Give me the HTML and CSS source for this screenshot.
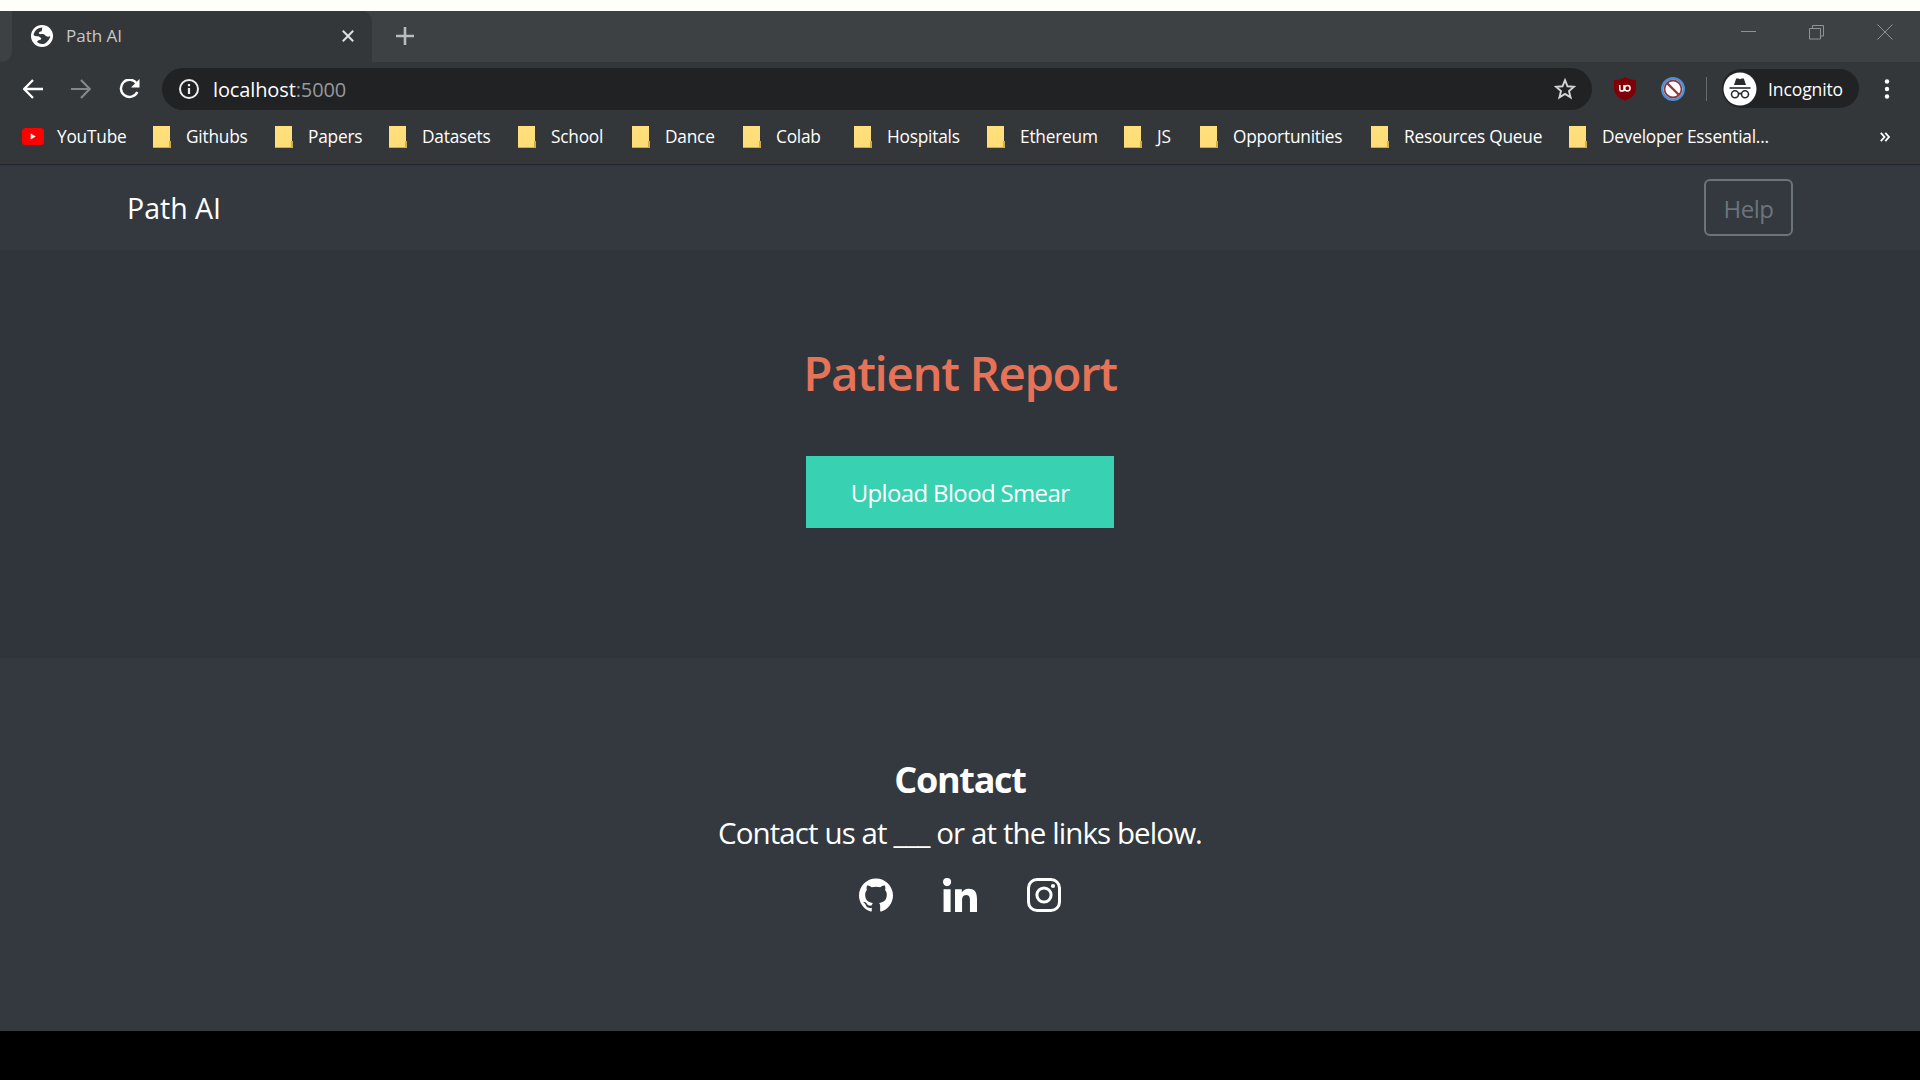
FILE: index.html
```html
<!DOCTYPE html>
<html lang="en">
<head>
<meta charset="utf-8">
<title>Path AI</title>
<link rel="stylesheet" href="styles.css">
</head>
<body>
<div class="desktop-strip"></div>
<div class="tab-strip">
  <div class="tab-edge"></div>
  <div class="tab">
    <svg class="globe" viewBox="0 0 22 22"><circle cx="11" cy="11" r="11" fill="#fff"/><path d="M11.500 2.500C7 2.600 3.200 5.500 2.600 10c1.400 1.600 3.200 1.200 4.600 1.300 1.200.1 1.600 1.600 2.900 1.600.5 1-.2 1.700-1.600 2.100-1.200.4-2.200 1-2.500 2 2.600 2.300 6.500 2.800 9.300.4 2.100-1.500 3.700-3.900 4-6.400-1.400.8-2.600 1-3.800.3-1.300-.8-2-2.100-3.600-2.300-1.500-.2-2.900.6-3.800-.3-.7-1 .4-2 1.700-2.100C11.300 6.500 10.700 4.200 11.500 2.500z" fill="#35383b"/></svg>
    <span class="tab-title">Path AI</span>
    <svg class="tab-close" viewBox="0 0 12 12"><path d="M.8.8l10.400 10.400M11.200.8L.8 11.200" stroke="#dfe1e5" stroke-width="2"/></svg>
  </div>
  <svg class="new-tab" viewBox="0 0 18 18"><path d="M9 0v18M0 9h18" stroke="#b9bcbf" stroke-width="2.600"/></svg>
  <div class="window-controls">
    <svg viewBox="0 0 16 16"><path d="M0 7.500h15" stroke="#8f9396"/></svg>
    <svg viewBox="0 0 16 16"><path d="M.5 4.500h11v10.500H.5zM3.500 4V1.500h11v10.500h-3" fill="none" stroke="#8f9396"/></svg>
    <svg viewBox="0 0 16 16"><path d="M.5.5l15 15M15.500.5l-15 15" stroke="#8f9396"/></svg>
  </div>
</div>
<div class="toolbar">
  <svg class="arrow" viewBox="0 0 20 20"><path d="M20 10H1.500M10 1L1.200 10l8.800 9" fill="none" stroke="#fff" stroke-width="2.300"/></svg>
  <svg class="arrow forward" viewBox="0 0 20 20"><path d="M0 10h18.500M10 1l8.800 9L10 19" fill="none" stroke="#85888b" stroke-width="2.200"/></svg>
  <svg class="reload" viewBox="0 0 22 20"><path d="M17.800 4.700A8.600 8.600 0 1 0 18.300 13" fill="none" stroke="#fff" stroke-width="2.400"/><path d="M20.500 0v8.500H12z" fill="#fff"/></svg>
  <div class="address">
    <svg class="info" viewBox="0 0 20 20"><circle cx="10" cy="10" r="9" fill="none" stroke="#eee" stroke-width="2"/><path d="M10 9v6M10 5v2.200" stroke="#eee" stroke-width="2.200"/></svg>
    <span class="url">localhost<span class="port">:5000</span></span>
    <svg class="star" viewBox="0 0 22 22"><path d="M11 2.200l2.500 6.100 6.500.5-5 4.200 1.600 6.400-5.600-3.500-5.600 3.500L7 13 2 8.800l6.500-.5z" fill="none" stroke="#d2d4d7" stroke-width="1.900"/></svg>
  </div>
  <svg class="ublock" viewBox="0 0 22 24"><path d="M11 0c3 2 7 2.800 11 2.900V11c0 7-5 10-11 13C5 21 0 18 0 11V2.900C4 2.800 8 2 11 0z" fill="#800006"/><path d="M5.800 8v4a2.100 2.100 0 0 0 4.200 0V8v6.200" fill="none" stroke="#fff" stroke-width="1.500"/><circle cx="13.400" cy="11.300" r="2.700" fill="none" stroke="#fff" stroke-width="1.500"/></svg>
  <svg class="blocker" viewBox="0 0 24 24"><circle cx="12" cy="12" r="10.800" fill="#fff" stroke="#4a90d9" stroke-width="2.400"/><circle cx="12" cy="12" r="8.500" fill="none" stroke="#8e3a40" stroke-width="1.800"/><path d="M6 6l12 12" stroke="#8e3a40" stroke-width="2.400"/></svg>
  <div class="divider"></div>
  <div class="incognito">
    <svg class="spy" viewBox="0 0 34 34"><circle cx="17" cy="17" r="16.500" fill="#fff"/><path d="M11 13l2.200-6.500h2.300l1.500.7 1.500-.7h2.300L23 13z" fill="#292b2e"/><path d="M6.500 16h21" stroke="#292b2e" stroke-width="1.600"/><g fill="none" stroke="#292b2e" stroke-width="1.600"><circle cx="12" cy="22.300" r="3.500"/><circle cx="22" cy="22.300" r="3.500"/><path d="M15.500 22q1.500-1.200 3 0"/></g></svg>
    <span>Incognito</span>
  </div>
  <svg class="menu" viewBox="0 0 6 20"><g fill="#fff"><circle cx="3" cy="2.500" r="2.200"/><circle cx="3" cy="10" r="2.200"/><circle cx="3" cy="17.500" r="2.200"/></g></svg>
</div>
<div class="bookmarks">
  <div class="bookmark"><svg class="youtube" viewBox="0 0 22 17"><rect width="22" height="17" rx="3.500" fill="#f00"/><path d="M8.700 5.500v6l5-3z" fill="#fff"/></svg><span>YouTube</span></div>
  <div class="bookmark"><i class="folder"></i><span>Githubs</span></div>
  <div class="bookmark"><i class="folder"></i><span>Papers</span></div>
  <div class="bookmark"><i class="folder"></i><span>Datasets</span></div>
  <div class="bookmark"><i class="folder"></i><span>School</span></div>
  <div class="bookmark"><i class="folder"></i><span>Dance</span></div>
  <div class="bookmark"><i class="folder"></i><span>Colab</span></div>
  <div class="bookmark"><i class="folder"></i><span>Hospitals</span></div>
  <div class="bookmark"><i class="folder"></i><span>Ethereum</span></div>
  <div class="bookmark"><i class="folder"></i><span>JS</span></div>
  <div class="bookmark"><i class="folder"></i><span>Opportunities</span></div>
  <div class="bookmark"><i class="folder"></i><span>Resources Queue</span></div>
  <div class="bookmark"><i class="folder"></i><span>Developer Essential...</span></div>
  <svg class="more" viewBox="0 0 10 10"><path d="M.8.8L4.500 5 .8 9.200M5.300.8L9 5 5.300 9.200" fill="none" stroke="#fff" stroke-width="1.800"/></svg>
</div>
<nav class="navbar">
  <a class="brand">Path AI</a>
  <button class="help">Help</button>
</nav>
<main class="report">
  <h1>Patient Report</h1>
  <button class="upload">Upload Blood Smear</button>
</main>
<footer class="contact">
  <h2>Contact</h2>
  <p>Contact us at ___ or at the links below.</p>
  <div class="social">
    <svg viewBox="0 0 24 24"><path fill="#fff" d="M12 .297c-6.630 0-12 5.373-12 12 0 5.303 3.438 9.800 8.205 11.385.6.113.82-.258.82-.577 0-.285-.01-1.040-.015-2.040-3.338.724-4.042-1.610-4.042-1.610C4.422 18.070 3.633 17.700 3.633 17.700c-1.087-.744.084-.729.084-.729 1.205.084 1.838 1.236 1.838 1.236 1.070 1.835 2.809 1.305 3.495.998.108-.776.417-1.305.760-1.605-2.665-.3-5.466-1.332-5.466-5.930 0-1.310.465-2.380 1.235-3.220-.135-.303-.540-1.523.105-3.176 0 0 1.005-.322 3.300 1.230.960-.267 1.980-.399 3-.405 1.020.006 2.040.138 3 .405 2.280-1.552 3.285-1.230 3.285-1.230.645 1.653.240 2.873.120 3.176.765.840 1.230 1.910 1.230 3.220 0 4.610-2.805 5.625-5.475 5.920.420.360.810 1.096.810 2.220 0 1.606-.015 2.896-.015 3.286 0 .315.210.690.825.570C20.565 22.092 24 17.592 24 12.297c0-6.627-5.373-12-12-12"/></svg>
    <svg viewBox="0 0 448 448"><path fill="#fff" d="M100.280 448H7.400V148.900h92.880zM53.790 108.100C24.090 108.100 0 83.500 0 53.800a53.790 53.790 0 0 1 107.580 0c0 29.700-24.100 54.300-53.790 54.300zM447.900 448h-92.680V302.400c0-34.700-.7-79.200-48.290-79.200-48.290 0-55.690 37.700-55.690 76.700V448h-92.780V148.900h89.080v40.800h1.300c12.400-23.500 42.690-48.300 87.880-48.300 94 0 111.280 61.900 111.280 142.300V448z"/></svg>
    <svg viewBox="0 0 34 34"><rect x="1.500" y="1.500" width="31" height="31" rx="8.500" fill="none" stroke="#fff" stroke-width="3"/><circle cx="17" cy="17" r="7.100" fill="none" stroke="#fff" stroke-width="3"/><circle cx="26" cy="8" r="2.100" fill="#fff"/></svg>
  </div>
</footer>
</body>
</html>
```
FILE: styles.css
```css
* { box-sizing: border-box; }
body {
  margin: 0;
  height: 1080px;
  overflow: hidden;
  background: #000;
  color: #fff;
  font-family: "Open Sans", "Noto Sans", sans-serif;
}
svg { display: block; flex: none; }
button { font-family: inherit; }

.desktop-strip { height: 11px; background: #fefefb; }

.tab-strip {
  display: flex;
  align-items: center;
  height: 51px;
  background: linear-gradient(#34373a, #34373a) 0 0 / 20px 51px no-repeat #3d4143;
}
.tab-edge { width: 12px; height: 100%; border-bottom-right-radius: 10px; background: #3d4143; }
.tab {
  display: flex;
  align-items: center;
  width: 360px;
  height: 51px;
  padding: 0 18px 2px 19px;
  border-radius: 0 10px 0 0;
  background: #34373a;
}
.globe { width: 22px; height: 22px; }
.tab-title { margin-left: 13px; font-size: 17px; color: #c6c8ca; }
.tab-close { width: 12px; height: 12px; margin-left: auto; }
.new-tab { width: 18px; height: 18px; margin: 0 0 1px 24px; }
.window-controls { display: flex; gap: 52px; margin: 0 27px 9px auto; }
.window-controls svg { width: 16px; height: 16px; }

.toolbar { display: flex; align-items: center; height: 53px; background: #34373a; padding: 0 30px 0 23px; }
.arrow { width: 20px; height: 20px; }
.forward { margin-left: 28px; }
.reload { width: 22px; height: 20px; margin-left: 28px; }
.address {
  display: flex;
  align-items: center;
  width: 1430px;
  height: 42px;
  margin-left: 21px;
  padding: 0 16px 0 17px;
  border-radius: 21px;
  background: #202224;
}
.info { width: 20px; height: 20px; }
.url { margin: 1px 0 0 14px; font-size: 20px; letter-spacing: -.12px; }
.port { color: #96999c; }
.star { width: 22px; height: 22px; margin-left: auto; }
.ublock { width: 22px; height: 24px; margin-left: 22px; }
.blocker { width: 24px; height: 24px; margin-left: 25px; }
.divider { width: 1px; height: 24px; margin-left: 21px; background: #6a6d70; }
.incognito {
  display: flex;
  align-items: center;
  width: 137px;
  height: 39px;
  margin-left: 15px;
  padding-left: 1px;
  border-radius: 20px;
  background: #202224;
  font-size: 17.500px;
  letter-spacing: -.1px;
}
.spy { width: 34px; height: 34px; margin-right: 11px; }
.menu { width: 6px; height: 20px; margin-left: auto; }

.bookmarks {
  display: grid;
  grid-template-columns: 131px 122px 114px 129px 114px 111px 111px 133px 137px 76px 171px 198px 1fr 10px;
  align-items: center;
  height: 50px;
  padding: 0 30px 6px 22px;
  border-bottom: 1px solid #22222c;
  background: #34373a;
  font-size: 17.300px;
  letter-spacing: -.22px;
  white-space: nowrap;
}
.bookmark { display: flex; align-items: center; }
.youtube { width: 22px; height: 17px; margin-right: 13px; }
.folder {
  width: 18px;
  height: 22px;
  margin-right: 15px;
  background:
    linear-gradient(#d6ac3c, #d6ac3c) 16px 15px / 2px 6px no-repeat,
    linear-gradient(#d6ac3c, #d6ac3c) 0 21px / 18px 1px no-repeat,
    linear-gradient(#ffe07e, #ffdc76) 0 0 / 17px 21px no-repeat;
}
.more { width: 10px; height: 10px; }

.navbar {
  display: flex;
  align-items: center;
  justify-content: space-between;
  height: 85px;
  padding: 0 127px;
  background: #33393f;
}
.brand { font-size: 28.500px; }
.help {
  width: 89px;
  height: 57px;
  padding: 1px 0 0;
  border: 2px solid #6c747b;
  border-radius: 6px;
  background: transparent;
  color: #6c747d;
  font-size: 24px;
  letter-spacing: -.5px;
}

.report {
  display: flex;
  flex-direction: column;
  align-items: center;
  height: 408px;
  padding-top: 90px;
  background: #2f353a;
}
h1 { margin: 0; font-size: 47.500px; line-height: 66px; font-weight: 600; letter-spacing: -1.4px; color: #e67358; }
.upload {
  width: 308px;
  height: 72px;
  margin-top: 50px;
  padding: 1px 0 0;
  border: 0;
  background: #38d1b2;
  color: #fff;
  font-size: 24px;
  letter-spacing: -.65px;
}

.contact {
  display: flex;
  flex-direction: column;
  align-items: center;
  height: 373px;
  padding-top: 97px;
  background: #33393e;
}
h2 { margin: 0; font-size: 36px; line-height: 50px; font-weight: 700; letter-spacing: -1.300px; }
p { margin: 6px 0 0; font-size: 29.500px; line-height: 44px; letter-spacing: -.9px; }
.social { display: flex; gap: 50px; margin-top: 23px; }
.social svg { width: 34px; height: 34px; }
```
